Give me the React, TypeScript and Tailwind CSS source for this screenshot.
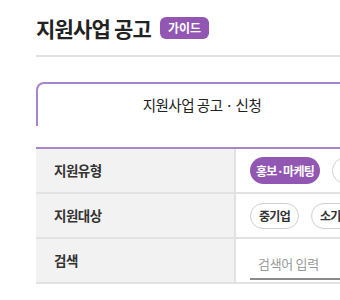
export default function App() {
  const rows = [
    { label: "지원유형", kind: "type" },
    { label: "지원대상", kind: "target" },
    { label: "검색", kind: "search" },
  ]

  return (
    <div className="w-[340px] h-[300px] overflow-hidden bg-white font-['Noto_Sans_CJK_KR','Noto_Sans',sans-serif] text-[#222]">
      <div className="w-[640px] pl-9 pt-[14px]">

        {/* Title */}
        <div className="flex items-center gap-[9px] h-[28px]">
          <h1 className="text-[21px] font-bold tracking-[-0.8px] leading-none">지원사업 공고</h1>
          <span className="h-[22px] w-[49px] rounded-md bg-[#9257b3] text-white text-[12px] font-bold flex items-center justify-center">
            가이드
          </span>
        </div>

        <div className="mt-[13px] h-[2px] bg-[#e2e2e2]" />

        {/* Tab */}
        <div className="mt-[25px] w-[332px] h-[44px] border-l-2 border-t-2 border-r-2 border-[#a884cf] rounded-tl-lg flex items-center justify-center text-[14.5px] tracking-[-0.5px] text-[#222]">
          지원사업 공고 · 신청
        </div>

        {/* Filter table */}
        <div className="mt-[21px] border-t-2 border-[#a884cf]">
          {rows.map((row) => (
            <div key={row.label} className="grid grid-cols-[200px_1fr] h-[45px] border-b-2 border-[#e2e2e2]">
              <div className="bg-[#f2f2f2] border-r-2 border-[#e2e2e2] flex items-center pl-[18px] text-[13.5px] font-bold tracking-[-0.5px] text-[#333]">
                {row.label}
              </div>
              <div className="flex items-center gap-3 pl-[14px]">
                {row.kind === "type" && (
                  <>
                    <span className="h-[27px] px-[6px] rounded-full bg-[#9257b3] text-white text-[12px] font-bold tracking-[-0.7px] flex items-center">
                      홍보·마케팅
                    </span>
                    <span className="h-[27px] w-[60px] rounded-full border border-[#cfcfcf]" />
                  </>
                )}
                {row.kind === "target" && (
                  <>
                    <span className="h-[26px] px-[8px] rounded-full border border-[#cfcfcf] text-[12px] font-bold tracking-[-0.7px] text-[#333] flex items-center">
                      중기업
                    </span>
                    <span className="h-[26px] px-[8px] rounded-full border border-[#cfcfcf] text-[12px] font-bold tracking-[-0.7px] text-[#333] flex items-center">
                      소기업
                    </span>
                  </>
                )}
                {row.kind === "search" && (
                  <div className="w-[200px] h-[30px] mt-[8px] border-b-2 border-[#8a8a8a] flex items-center pl-[8px] text-[13px] tracking-[-0.3px] text-[#9a9a9a]">
                    검색어 입력
                  </div>
                )}
              </div>
            </div>
          ))}
        </div>
      </div>
    </div>
  )
}
